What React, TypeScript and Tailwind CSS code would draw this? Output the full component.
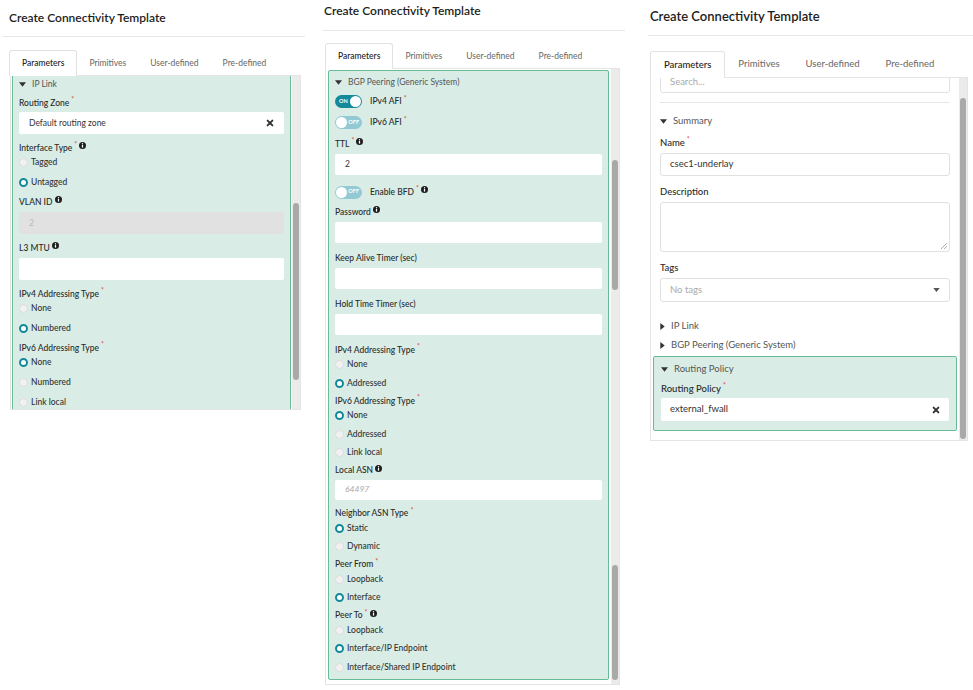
import type { ReactNode } from 'react';

const font = { fontFamily: 'Lato, "Open Sans", "Liberation Sans", sans-serif' };

function Info() {
  return (
    <svg width="7" height="7" viewBox="0 0 10 10" className="ml-[2px] -mt-[5px]">
      <circle cx="5" cy="5" r="5" fill="#1e1e1e" />
      <rect x="4.1" y="4.2" width="1.8" height="3.8" fill="#fff" />
      <circle cx="5" cy="2.6" r="1" fill="#fff" />
    </svg>
  );
}

function Req() {
  return <span className="text-[#e2483f] text-[7px] ml-[2px] -mt-[7px] leading-none">*</span>;
}

function Label({ text, req, info, big }: { text: string; req?: boolean; info?: boolean; big?: boolean }) {
  return (
    <div className={`flex items-center font-medium text-[#2a2a2a] whitespace-nowrap ${big ? 'h-[16px] text-[9.5px]' : 'h-[14px] text-[8.5px]'}`}>
      <span>{text}</span>
      {req && <Req />}
      {info && <Info />}
    </div>
  );
}

function Cross() {
  return (
    <svg width="8" height="8" viewBox="0 0 10 10">
      <path d="M2 2 L8 8 M8 2 L2 8" stroke="#333" strokeWidth="2.4" strokeLinecap="round" />
    </svg>
  );
}

function Caret({ open }: { open?: boolean }) {
  return open ? (
    <svg width="7" height="5" viewBox="0 0 8 5">
      <path d="M0 0 H8 L4 5 Z" fill="#333" />
    </svg>
  ) : (
    <svg width="5" height="7" viewBox="0 0 5 8">
      <path d="M0 0 V8 L5 4 Z" fill="#333" />
    </svg>
  );
}

function Section({ title, open, big }: { title: string; open?: boolean; big?: boolean }) {
  return (
    <div className={`flex items-center gap-[6px] text-[#555] whitespace-nowrap ${big ? 'h-[19px] text-[9.5px]' : 'h-[17px] text-[8.5px]'}`}>
      <Caret open={open} />
      <span>{title}</span>
    </div>
  );
}

function Radio({ label, on, tight }: { label: string; on?: boolean; tight?: boolean }) {
  return (
    <div className={tight ? 'h-[18.5px]' : 'h-[20px]'}>
      <div className="h-[15px] flex items-center gap-[3px] text-[8.5px] font-medium text-[#333] whitespace-nowrap">
        {on ? (
          <span className="w-[9px] h-[9px] rounded-full border-[2.5px] border-[#14899a] bg-white" />
        ) : (
          <span className="w-[9px] h-[9px] rounded-full bg-[#f1f1f1] border border-[#dcdcdc]" />
        )}
        <span>{label}</span>
      </div>
    </div>
  );
}

function Toggle({ on, label, req, info, h }: { on?: boolean; label: string; req?: boolean; info?: boolean; h: string }) {
  return (
    <div className={`flex items-center gap-[8px] ${h}`}>
      {on ? (
        <div className="w-[27px] h-[13px] rounded-full bg-[#14899a] flex items-center justify-between pl-[4px] pr-[1px]">
          <span className="text-[5.5px] font-bold text-white leading-none">ON</span>
          <span className="w-[11px] h-[11px] rounded-full bg-white" />
        </div>
      ) : (
        <div className="w-[27px] h-[13px] rounded-full bg-[#92c9d2] flex items-center justify-between pl-[1px] pr-[3px]">
          <span className="w-[11px] h-[11px] rounded-full bg-white" />
          <span className="text-[5.5px] font-bold text-white leading-none">OFF</span>
        </div>
      )}
      <div className="flex items-center text-[8.5px] font-medium text-[#2a2a2a]">
        <span>{label}</span>
        {req && <Req />}
        {info && <Info />}
      </div>
    </div>
  );
}

function Input({ value, h = 'h-[22px]', mt = 'mt-[3px]', mb = 'mb-[7px]', cls = '', children }: { value?: ReactNode; h?: string; mt?: string; mb?: string; cls?: string; children?: ReactNode }) {
  return (
    <div className={`${h} ${mt} ${mb} rounded-[2px] flex items-center justify-between px-[10px] text-[8.5px] ${cls || 'bg-white text-[#333]'}`}>
      <span>{value}</span>
      {children}
    </div>
  );
}

function Tabs({ big }: { big?: boolean }) {
  const pad = big ? 'px-[13px] text-[9.5px] h-[27px]' : 'px-[12px] text-[8.5px] h-[26px]';
  return (
    <div className="flex items-end whitespace-nowrap">
      <div className={`${pad} flex items-center bg-white border border-b-0 border-[#e2e2e2] rounded-t-[3px] text-[#222] font-medium`}>
        Parameters
      </div>
      {['Primitives', 'User-defined', 'Pre-defined'].map((t) => (
        <div key={t} className={`${pad} flex items-center text-[#666]`}>
          {t}
        </div>
      ))}
    </div>
  );
}

function IpLinkPanel() {
  return (
    <div className="w-[305px] shrink-0">
      <div className="ml-[2px] pl-[7px] pt-[9px] h-[37px] border-b border-[#e4e7eb] text-[12px] font-semibold text-[#1d1d1d] leading-[18px]">
        Create Connectivity Template
      </div>
      <div className="mt-[13px] ml-[9px]">
        <Tabs />
      </div>
      <div className="ml-[10px] w-[291px] h-[335px] -mt-px border border-[#e4e4e4] bg-white flex overflow-hidden">
        <div className="ml-[1px] w-[280px] bg-[#d9ede6] border-x border-[#68bb97] px-[6px]">
          <Section title="IP Link" open />
          <div className="mt-[3px]">
            <Label text="Routing Zone" req />
          </div>
          <Input value="Default routing zone" mt="mt-[2px]">
            <Cross />
          </Input>
          <Label text="Interface Type" req info />
          <Radio label="Tagged" />
          <Radio label="Untagged" on />
          <Label text="VLAN ID" info />
          <Input value="2" cls="bg-[#e1e1e1] text-[#bbbbbb]" />
          <Label text="L3 MTU" info />
          <Input />
          <Label text="IPv4 Addressing Type" req />
          <Radio label="None" />
          <Radio label="Numbered" on />
          <Label text="IPv6 Addressing Type" req />
          <Radio label="None" on />
          <Radio label="Numbered" />
          <Radio label="Link local" />
        </div>
        <div className="ml-[1px] w-[8px] bg-[#ebebeb] flex flex-col">
          <div className="mt-[127px] mx-[1px] h-[177px] rounded-full bg-[#a9a9a9]" />
        </div>
      </div>
    </div>
  );
}

function BgpPanel() {
  return (
    <div className="ml-[10px] w-[310px] shrink-0">
      <div className="ml-[8px] pl-[1px] pt-[2px] h-[31px] border-b border-[#e4e7eb] text-[12px] font-semibold text-[#1d1d1d] leading-[18px]">
        Create Connectivity Template
      </div>
      <div className="mt-[12px] ml-[10px]">
        <Tabs />
      </div>
      <div className="ml-[10px] w-[295px] h-[617px] -mt-px border border-[#e4e4e4] bg-white flex">
        <div className="mt-[1px] ml-[2px] w-[282px] h-[610px] bg-[#d9ede6] border border-[#68bb97] rounded-[2px] px-[6px]">
          <div className="mt-[2px] h-[18px] flex items-center">
            <Section title="BGP Peering (Generic System)" open />
          </div>
          <Toggle on label="IPv4 AFI" req h="h-[21px]" />
          <Toggle label="IPv6 AFI" req h="h-[21px]" />
          <div className="mt-[4px]">
            <Label text="TTL" req info />
          </div>
          <Input value="2" h="h-[21px]" mb="mb-[8px]" />
          <Toggle label="Enable BFD" req info h="h-[18px]" />
          <div className="mt-[4px]">
            <Label text="Password" info />
          </div>
          <Input h="h-[21px]" mb="mb-[8px]" />
          <Label text="Keep Alive Timer (sec)" />
          <Input h="h-[21px]" mb="mb-[8px]" />
          <Label text="Hold Time Timer (sec)" />
          <Input h="h-[21px]" mb="mb-[8px]" />
          <Label text="IPv4 Addressing Type" req />
          <Radio tight label="None" />
          <Radio tight label="Addressed" on />
          <Label text="IPv6 Addressing Type" req />
          <Radio tight label="None" on />
          <Radio tight label="Addressed" />
          <Radio tight label="Link local" />
          <Label text="Local ASN" info />
          <Input h="h-[20px]" mt="mt-[2px]" mb="mb-[7px]" value={<span className="italic text-[#a8a8a8]">64497</span>} />
          <Label text="Neighbor ASN Type" req />
          <Radio tight label="Static" on />
          <Radio tight label="Dynamic" />
          <Label text="Peer From" req />
          <Radio tight label="Loopback" />
          <Radio tight label="Interface" on />
          <Label text="Peer To" req info />
          <Radio tight label="Loopback" />
          <Radio tight label="Interface/IP Endpoint" on />
          <Radio tight label="Interface/Shared IP Endpoint" />
        </div>
        <div className="ml-[2px] w-[8px] bg-[#ebebeb] flex flex-col">
          <div className="mt-[91px] mx-[1px] h-[130px] rounded-full bg-[#a9a9a9]" />
          <div className="mt-[275px] mx-[1px] h-[115px] rounded-full bg-[#a9a9a9]" />
        </div>
      </div>
    </div>
  );
}

function FieldInput({ children, h = 'h-[23px]' }: { children?: ReactNode; h?: string }) {
  return (
    <div className={`${h} mt-[2px] border border-[#e1e1e1] rounded-[3px] bg-white flex items-center justify-between px-[9px] text-[9.5px] text-[#333]`}>
      {children}
    </div>
  );
}

function SummaryPanel() {
  return (
    <div className="ml-[15px] w-[333px] shrink-0">
      <div className="ml-[8px] pl-[2px] pt-[6px] h-[36px] border-b border-[#e4e7eb] text-[13px] font-semibold text-[#1d1d1d] leading-[20px]">
        Create Connectivity Template
      </div>
      <div className="mt-[15px] ml-[10px]">
        <Tabs big />
      </div>
      <div className="ml-[10px] w-[318px] h-[364px] -mt-px border border-[#e4e4e4] bg-white flex">
        <div className="w-[309px] pl-[9px] pr-[9px] overflow-hidden">
          <div className="-mt-[7px] h-[22px] border border-[#e1e1e1] rounded-[3px] flex items-center px-[9px] text-[9.5px] text-[#aaa]">
            Search...
          </div>
          <div className="mt-[9px] border-t border-[#e6e6e6]" />
          <div className="mt-[9px]">
            <Section title="Summary" open big />
          </div>
          <div className="mt-[4px]">
            <Label text="Name" req big />
          </div>
          <FieldInput>csec1-underlay</FieldInput>
          <div className="mt-[8px]">
            <Label text="Description" big />
          </div>
          <div className="mt-[2px] h-[50px] border border-[#e1e1e1] rounded-[3px] bg-white flex items-end justify-end p-[2px]">
            <svg width="6" height="6" viewBox="0 0 6 6">
              <path d="M6 0 L0 6 M6 3 L3 6" stroke="#999" strokeWidth="0.8" />
            </svg>
          </div>
          <div className="mt-[8px]">
            <Label text="Tags" big />
          </div>
          <FieldInput h="h-[24px]">
            <span className="text-[#aaa]">No tags</span>
            <svg width="7" height="4" viewBox="0 0 8 5">
              <path d="M0 0 H8 L4 5 Z" fill="#555" />
            </svg>
          </FieldInput>
          <div className="mt-[15px]">
            <Section title="IP Link" big />
          </div>
          <Section title="BGP Peering (Generic System)" big />
          <div className="-mx-[7px] mt-[1px] h-[75px] bg-[#d9ede6] border border-[#68bb97] rounded-[2px] px-[7px] pt-[3px]">
            <Section title="Routing Policy" open big />
            <div className="mt-[2px]">
              <Label text="Routing Policy" req big />
            </div>
            <div className="mt-[1px] h-[23px] rounded-[2px] bg-white flex items-center justify-between px-[9px] text-[9.5px] text-[#333]">
              <span>external_fwall</span>
              <Cross />
            </div>
          </div>
        </div>
        <div className="w-[8px] bg-[#ebebeb] flex flex-col">
          <div className="mt-[20px] mx-[1px] h-[341px] rounded-full bg-[#a9a9a9]" />
        </div>
      </div>
    </div>
  );
}

export default function App() {
  return (
    <div className="w-[973px] h-[690px] bg-white flex items-start overflow-hidden" style={font}>
      <IpLinkPanel />
      <BgpPanel />
      <SummaryPanel />
    </div>
  );
}
